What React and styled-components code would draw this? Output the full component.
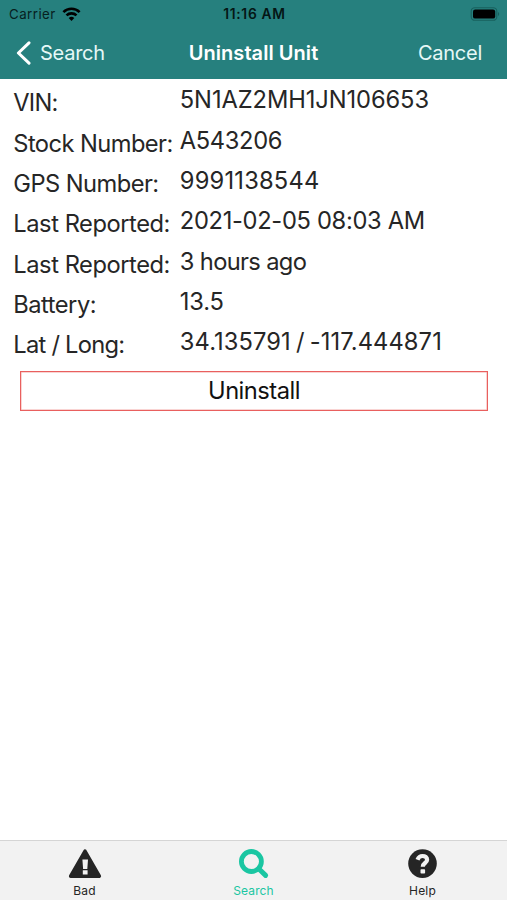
import React from "react";
import styled, { createGlobalStyle } from "styled-components";

const GlobalStyle = createGlobalStyle`
  * {
    box-sizing: border-box;
  }
  body {
    margin: 0;
    background-color: #ffffff;
    font-family: Inter, "Liberation Sans", sans-serif;
  }
`;

const Screen = styled.div`
  width: 100%;
  height: 100vh;
  display: flex;
  flex-direction: column;
  overflow: hidden;
`;

const Header = styled.header`
  height: 79px;
  flex: none;
  background-color: #26807e;
`;

const StatusBar = styled.div`
  height: 27px;
  display: grid;
  grid-template-columns: 1fr auto 1fr;
  align-items: center;
  padding: 1px 7px 0 9px;
  font-size: 13.3px;
  line-height: 26px;
  color: #06201f;
`;

const Carrier = styled.div`
  display: flex;
  align-items: center;
  gap: 6px;
  letter-spacing: 0.45px;
`;

const Clock = styled.div`
  font-size: 13.8px;
  font-weight: 600;
  color: #041615;
  letter-spacing: 0.7px;
`;

const BatteryIcon = styled.svg`
  justify-self: end;
`;

const NavBar = styled.nav`
  height: 52px;
  display: grid;
  grid-template-columns: 1fr auto 1fr;
  align-items: center;
  padding-bottom: 1px;
  color: #ffffff;
  font-size: 20px;
`;

const BackButton = styled.div`
  display: flex;
  align-items: center;
  gap: 9px;
  padding-left: 16px;
  letter-spacing: -0.25px;
  color: #e6f8f7;
`;

const Title = styled.h1`
  margin: 0;
  font-size: 20px;
  font-weight: 600;
  letter-spacing: 0.05px;
`;

const CancelButton = styled.div`
  justify-self: end;
  padding-right: 25px;
  letter-spacing: -0.25px;
  color: #e6f8f7;
`;

const Content = styled.main`
  flex: 1;
  padding-top: 3.4px;
`;

const Row = styled.div`
  height: 40.3px;
  display: grid;
  grid-template-columns: 166.5px 1fr;
  padding-left: 13.3px;
  font-size: 23.7px;
  line-height: 36px;
  color: #262626;
  white-space: nowrap;
`;

const Label = styled.div`
  padding-top: 3px;
  letter-spacing: ${({ $track }) => $track || "-0.5px"};
`;

const Value = styled.div`
  letter-spacing: ${({ $track }) => $track || "-0.5px"};
  word-spacing: ${({ $wordGap }) => $wordGap || "normal"};
`;

const UninstallButton = styled.div`
  height: 40px;
  margin: 6.4px 19px 0 20px;
  border: 1px solid #e9605e;
  box-shadow: inset 0 0 0 0.5px #f3aaa8;
  display: flex;
  align-items: center;
  justify-content: center;
  font-size: 23.7px;
  letter-spacing: -0.5px;
  color: #111111;
`;

const TabBar = styled.footer`
  height: 60px;
  flex: none;
  display: grid;
  grid-template-columns: repeat(3, 1fr);
  border-top: 1px solid #d5d5d5;
  background-color: #f2f2f2;
`;

const Tab = styled.div`
  display: flex;
  flex-direction: column;
  align-items: center;
  gap: 4px;
  padding-top: 7px;
  font-size: 12px;
  line-height: 16px;
  letter-spacing: 0.15px;
  color: ${({ $active }) => ($active ? "#1ac6a2" : "#252525")};
`;

const TabIcon = styled.svg`
  width: 34px;
  height: 31px;
  flex: none;
`;

const details = [
  { label: "VIN:", value: "5N1AZ2MH1JN106653", labelTrack: "-0.8px", valueTrack: "-0.08px" },
  { label: "Stock Number:", value: "A543206", labelTrack: "-0.57px", valueTrack: "-0.35px" },
  { label: "GPS Number:", value: "9991138544", labelTrack: "-0.55px", valueTrack: "0.2px" },
  { label: "Last Reported:", value: "2021-02-05 08:03 AM", labelTrack: "-0.45px", valueTrack: "-0.32px" },
  { label: "Last Reported:", value: "3 hours ago", labelTrack: "-0.45px", valueTrack: "-0.65px" },
  { label: "Battery:", value: "13.5", valueTrack: "-0.2px" },
  {
    label: "Lat / Long:",
    value: "34.135791 / -117.444871",
    labelTrack: "-0.75px",
    valueTrack: "0.1px",
    wordGap: "-1.6px",
  },
];

function WarningIcon() {
  return (
    <TabIcon viewBox="0 0 34 31">
      <path d="M17 3L31.4 28.2H2.6z" fill="currentColor" stroke="currentColor" strokeWidth="3.4" strokeLinejoin="round" />
      <path d="M14.4 11.6h5.6l-.7 9.4h-4.2zM14.8 22.3h4.8v4.2h-4.8z" fill="#f2f2f2" />
    </TabIcon>
  );
}

function SearchIcon() {
  return (
    <TabIcon viewBox="0 0 34 31" fill="none" stroke="currentColor">
      <circle cx="14.4" cy="13.5" r="10" strokeWidth="4.8" />
      <path d="M22 21L28.6 27.4" strokeWidth="5" strokeLinecap="round" />
    </TabIcon>
  );
}

function HelpIcon() {
  return (
    <TabIcon viewBox="0 0 34 31">
      <circle cx="16.5" cy="15.6" r="14.3" fill="currentColor" />
      <path
        d="M11.5 11.7c1-2.4 2.7-3.7 5-3.7 2.7 0 4.6 1.4 4.6 3.7 0 3.6-4.3 3.1-4.3 7.1"
        fill="none"
        stroke="#f2f2f2"
        strokeWidth="4.2"
      />
      <rect x="14.5" y="21.2" width="4.6" height="4.4" rx="0.8" fill="#f2f2f2" />
    </TabIcon>
  );
}

export default function App() {
  return (
    <Screen>
      <GlobalStyle />
      <Header>
        <StatusBar>
          <Carrier>
            Carrier
            <svg width="19" height="14" viewBox="0 0 18 14" fill="none" stroke="#000" strokeWidth="2.6">
              <path d="M0.9 5.1a11.5 11.5 0 0 1 16.2 0" />
              <path d="M4 8.4a7.1 7.1 0 0 1 10 0" />
              <path d="M9 14L6.2 11.1a4 4 0 0 1 5.6 0z" fill="#000" stroke="none" />
            </svg>
          </Carrier>
          <Clock>11:16 AM</Clock>
          <BatteryIcon width="30" height="14" viewBox="0 0 30 14">
            <rect x="1.2" y="0.7" width="25.6" height="12.6" rx="3.6" fill="none" stroke="#18605e" strokeWidth="1.1" />
            <rect x="3" y="2.4" width="22.2" height="9.2" rx="2.2" fill="#000" />
            <path d="M28 5v4c1.6-.6 1.6-3.4 0-4z" fill="#18605e" />
          </BatteryIcon>
        </StatusBar>
        <NavBar>
          <BackButton>
            <svg width="15" height="24" viewBox="0 0 15 24" fill="none" stroke="#fff" strokeWidth="3">
              <path d="M13 1.8L2.4 12L13 22.2" strokeLinecap="round" strokeLinejoin="round" />
            </svg>
            Search
          </BackButton>
          <Title>Uninstall Unit</Title>
          <CancelButton>Cancel</CancelButton>
        </NavBar>
      </Header>
      <Content>
        {details.map(({ label, value, labelTrack, valueTrack, wordGap }, i) => (
          <Row key={i}>
            <Label $track={labelTrack}>{label}</Label>
            <Value $track={valueTrack} $wordGap={wordGap}>
              {value}
            </Value>
          </Row>
        ))}
        <UninstallButton>Uninstall</UninstallButton>
      </Content>
      <TabBar>
        <Tab>
          <WarningIcon />
          Bad
        </Tab>
        <Tab $active>
          <SearchIcon />
          Search
        </Tab>
        <Tab>
          <HelpIcon />
          Help
        </Tab>
      </TabBar>
    </Screen>
  );
}
